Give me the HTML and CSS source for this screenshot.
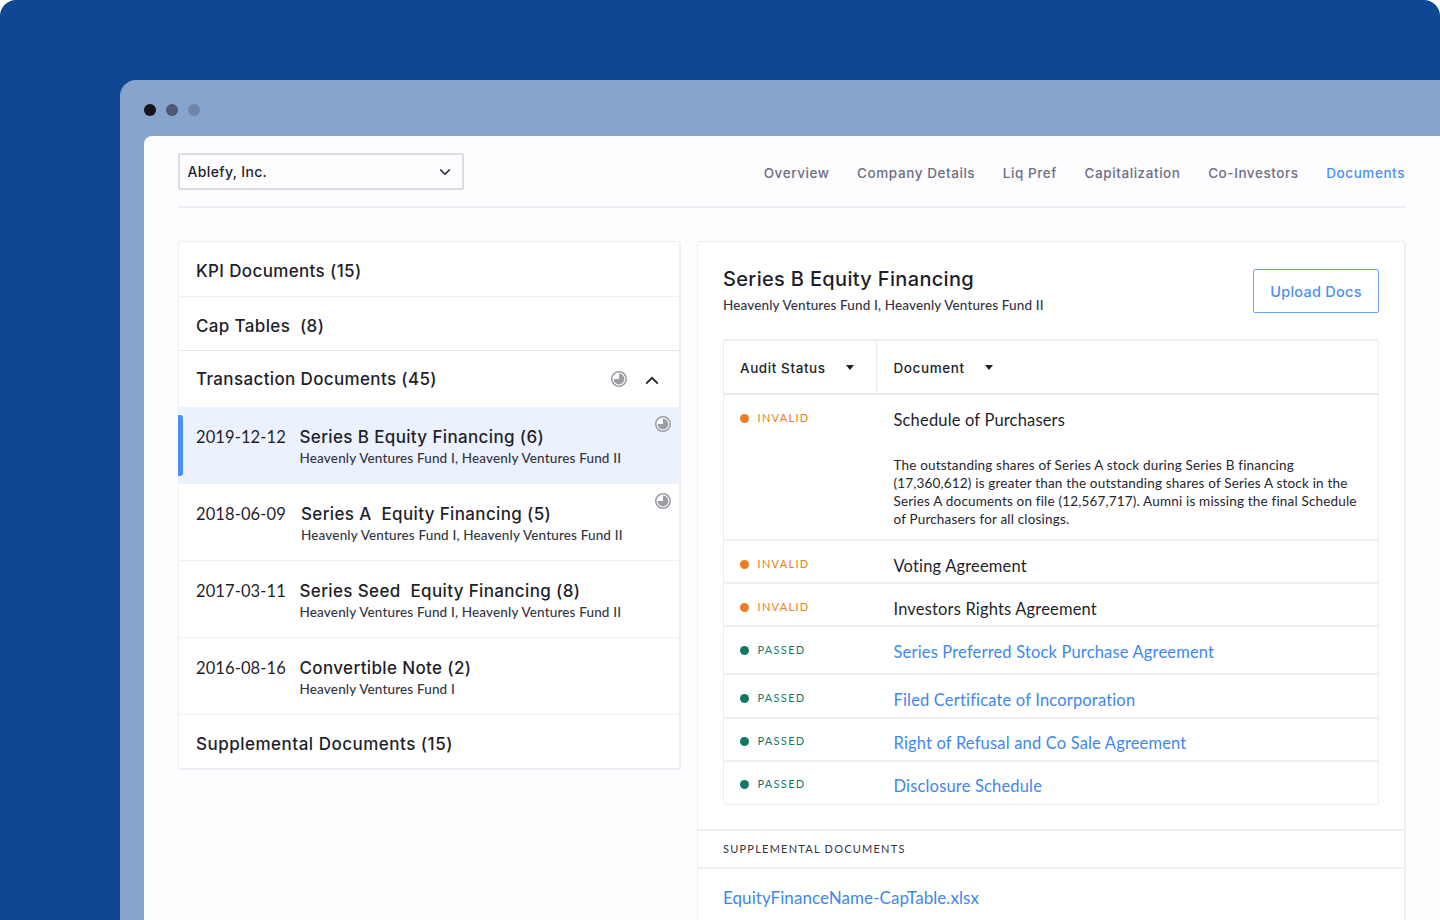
FILE: index.html
```html
<!DOCTYPE html>
<html lang="en">
<head>
<meta charset="utf-8">
<title>Ablefy Documents</title>
<link rel="stylesheet" href="styles.css">
</head>
<body>
<div class="stage">
  <div class="window">
    <div class="dots"><i class="dot d1"></i><i class="dot d2"></i><i class="dot d3"></i></div>
    <div class="app">
      <header class="topbar">
        <div class="select"><span>Ablefy, Inc.</span>
          <svg width="12" height="8" viewBox="0 0 12 8"><path d="M1.2 1.5 6 6.2l4.8-4.7" fill="none" stroke="#1f1f2b" stroke-width="1.5"/></svg>
        </div>
        <nav class="nav">
          <a>Overview</a><a>Company Details</a><a>Liq Pref</a><a>Capitalization</a><a>Co-Investors</a><a class="on">Documents</a>
        </nav>
      </header>
      <main class="columns">
        <section class="card left">
          <div class="row head h1"><h3>KPI Documents (15)</h3></div>
          <div class="row head h2"><h3>Cap Tables&nbsp; (8)</h3></div>
          <div class="row head h3"><h3>Transaction Documents (45)</h3>
            <svg class="pie hpie" width="16" height="16" viewBox="0 0 16 16"><circle cx="8" cy="8" r="7.25" fill="#fff" stroke="#9c9ca4" stroke-width="1.5"/><path d="M8 8V2.6A5.4 5.4 0 1 1 2.6 8Z" fill="#9c9ca4"/></svg>
            <svg class="chev" width="14" height="9" viewBox="0 0 14 9"><path d="M1.2 7.6 7 1.8l5.8 5.8" fill="none" stroke="#1f1f2b" stroke-width="1.7"/></svg>
          </div>
          <div class="row item active"><span class="date">2019-12-12</span><div class="info"><h4>Series B Equity Financing (6)</h4><p>Heavenly Ventures Fund I, Heavenly Ventures Fund II</p></div>
            <svg class="pie ipie" width="16" height="16" viewBox="0 0 16 16"><circle cx="8" cy="8" r="7.25" fill="#fff" stroke="#9c9ca4" stroke-width="1.5"/><path d="M8 8V2.6A5.4 5.4 0 1 1 2.6 8Z" fill="#9c9ca4"/></svg>
          </div>
          <div class="row item"><span class="date wide">2018-06-09</span><div class="info"><h4>Series A&nbsp; Equity Financing (5)</h4><p>Heavenly Ventures Fund I, Heavenly Ventures Fund II</p></div>
            <svg class="pie ipie" width="16" height="16" viewBox="0 0 16 16"><circle cx="8" cy="8" r="7.25" fill="#fff" stroke="#9c9ca4" stroke-width="1.5"/><path d="M8 8V2.6A5.4 5.4 0 1 1 2.6 8Z" fill="#9c9ca4"/></svg>
          </div>
          <div class="row item"><span class="date">2017-03-11</span><div class="info"><h4>Series Seed&nbsp; Equity Financing (8)</h4><p>Heavenly Ventures Fund I, Heavenly Ventures Fund II</p></div></div>
          <div class="row item"><span class="date">2016-08-16</span><div class="info"><h4>Convertible Note (2)</h4><p>Heavenly Ventures Fund I</p></div></div>
          <div class="row head h5"><h3>Supplemental Documents (15)</h3></div>
        </section>
        <section class="card right">
          <div class="title">
            <div><h2>Series B Equity Financing</h2><p>Heavenly Ventures Fund I, Heavenly Ventures Fund II</p></div>
            <button class="upload">Upload Docs</button>
          </div>
          <div class="table">
            <div class="thead">
              <div class="th c1">Audit Status<i class="caret"></i></div>
              <div class="th c2">Document<i class="caret"></i></div>
            </div>
            <div class="tr r1"><div class="st bad"><i></i>INVALID</div><div class="doc"><span>Schedule of Purchasers</span>
              <p class="note">The outstanding shares of Series A stock during Series B financing (17,360,612) is greater than the outstanding shares of Series A stock in the Series A documents on file (12,567,717). Aumni is missing the final Schedule of Purchasers for all closings.</p></div></div>
            <div class="tr r2"><div class="st bad"><i></i>INVALID</div><div class="doc"><span>Voting Agreement</span></div></div>
            <div class="tr r2"><div class="st bad"><i></i>INVALID</div><div class="doc"><span>Investors Rights Agreement</span></div></div>
            <div class="tr r3"><div class="st ok"><i></i>PASSED</div><div class="doc link"><span>Series Preferred Stock Purchase Agreement</span></div></div>
            <div class="tr r5"><div class="st ok"><i></i>PASSED</div><div class="doc link"><span>Filed Certificate of Incorporation</span></div></div>
            <div class="tr r4"><div class="st ok"><i></i>PASSED</div><div class="doc link"><span>Right of Refusal and Co Sale Agreement</span></div></div>
            <div class="tr r4"><div class="st ok"><i></i>PASSED</div><div class="doc link"><span>Disclosure Schedule</span></div></div>
          </div>
          <div class="supp">SUPPLEMENTAL DOCUMENTS</div>
          <div class="file">EquityFinanceName-CapTable.xlsx</div>
        </section>
      </main>
    </div>
  </div>
</div>
</body>
</html>
```
FILE: styles.css
```css
* { box-sizing: border-box; }
html, body { margin: 0; height: 920px; background: #fff; overflow: hidden; }
body { font-family: "Lato", "Liberation Sans", sans-serif; color: #1f1f2b; }
h2, h3, h4, p { margin: 0; font-weight: 500; }
.stage { width: 1440px; height: 920px; background: #0f4794; border-radius: 16px 16px 0 0; padding: 80px 0 0 120px; overflow: hidden; }
.window { height: 840px; background: #88a4cc; border-radius: 16px 0 0 0; padding-left: 24px; }
.dots { height: 56px; display: flex; align-items: center; gap: 10px; padding-top: 4px; }
.dot { width: 12px; height: 12px; border-radius: 50%; }
.d1 { background: #14131b; }
.d2 { background: #4d5874; }
.d3 { background: #6f84a8; }
.app { height: 784px; background: #fdfcff; border-radius: 8px 0 0 0; padding: 17px 34px 0; }
.topbar { display: flex; justify-content: space-between; align-items: flex-start; height: 55px; border-bottom: 2px solid #eeeef2; }
.select { width: 286px; height: 37px; border: 2px solid #dcdce2; border-radius: 2px; display: flex; align-items: center; justify-content: space-between; padding: 0 11px 0 7.5px; font: 500 14px "Inter", sans-serif; letter-spacing: .35px; }
.nav { display: flex; gap: 27.6px; padding: 11px 1px 0 0; font: 500 13.5px/18px "Inter", sans-serif; letter-spacing: .57px; color: #6e6e85; }
.nav .on { color: #4a90f5; }
.columns { display: flex; gap: 16px; margin-top: 33px; align-items: flex-start; }
.card { background: #fff; border: 2px solid #eeeef4; border-radius: 3px; }
.left { width: 503px; border-width: 1px 2px 2px 1px; }
.right { width: 709px; height: 700px; border-width: 1px 2px 0 1px; }
.row { border-bottom: 1px solid #f0f0f4; position: relative; padding-left: 17px; }
.head { display: flex; align-items: center; }
.h1 { height: 55px; padding-top: 4px; }
.h2 { height: 54px; padding-top: 4px; border-color: #e4e4ea; }
.h3 { height: 56px; padding-right: 20px; border: 0; }
.h5 { height: 53px; padding-top: 4px; border-bottom: 0; }
h3 { font: 500 17px "Inter", sans-serif; letter-spacing: .36px; color: #1f1f2b; flex: 1; }
.h5 h3 { letter-spacing: .5px; }
.pie { display: block; }
.hpie { margin-right: 18px; }
.chev { margin-top: 2px; }
.item { height: 77px; display: flex; padding-top: 19px; gap: 13px; }
.item.active { background: #ebf2fe; }
.item.active::before { content: ""; position: absolute; left: -1px; top: 8px; width: 5px; height: 61px; background: #4a90f5; border-radius: 0 3px 3px 0; }
.date { font-size: 16.5px; line-height: 22px; letter-spacing: .1px; width: 90.5px; white-space: nowrap; }
.date.wide { width: 92px; }
.info h4 { font: 500 17px/22px "Inter", sans-serif; letter-spacing: .36px; }
.info p { font-size: 13.5px; line-height: 18px; letter-spacing: .16px; margin-top: 1px; color: #35353f; }
.ipie { position: absolute; right: 8px; top: 9px; }
.title { display: flex; justify-content: space-between; padding: 23px 25px 0 25px; height: 97px; }
.title h2 { font: 500 20px/28px "Inter", sans-serif; letter-spacing: .33px; }
.title p { font-size: 13.5px; line-height: 18px; letter-spacing: .14px; margin-top: 3px; color: #35353f; }
.upload { width: 126px; height: 44px; margin-top: 4px; background: #fff; border: 1.5px solid #6aa3f4; border-radius: 2px; color: #4a90f5; font: 500 14.5px "Inter", sans-serif; letter-spacing: .25px; padding: 0; }
.table { margin: 0 25px; border: 1px solid #ececf2; border-top-width: 2px; border-radius: 3px; height: 466px; }
.thead { display: flex; height: 54px; border-bottom: 2px solid #e9e9f0; }
.th { font: 500 13.5px "Inter", sans-serif; letter-spacing: .58px; display: flex; align-items: center; padding: 2px 0 0 16px; }
.c1 { width: 153px; border-right: 1px solid #e9e9f0; }
.c2 { padding-left: 16.5px; }
.caret { width: 0; height: 0; border: 4.5px solid transparent; border-top: 5px solid #1f1f2b; border-bottom: 0; margin-left: 20px; margin-top: -2px; }
.tr { display: flex; border-bottom: 2px solid #eeeef4; }
.tr:last-child { border-bottom: 0; }
.r1 { height: 146px; }
.r2, .r4 { height: 43px; }
.r3 { height: 48px; }
.r5 { height: 44px; }
.st { width: 153px; padding: 15px 0 0 16px; font-size: 11px; line-height: 16px; letter-spacing: 1.3px; display: flex; gap: 8.5px; }
.r4 .st { padding-top: 14px; }
.st i { width: 9px; height: 9px; border-radius: 50%; margin-top: 3.5px; flex: none; }
.bad { color: #ed7d23; }
.bad i { background: #ed7d23; }
.ok { color: #127a64; }
.ok i { background: #127a64; }
.doc { flex: 1; padding: 13px 0 0 16.5px; font-size: 16.5px; line-height: 24px; letter-spacing: .17px; }
.r4 .doc { padding-top: 12px; }
.link { color: #3f87ee; }
.note { font-size: 13.5px; line-height: 18px; letter-spacing: .18px; font-weight: 400; margin-top: 24px; padding-right: 20px; color: #26262f; }
.supp { margin-top: 24px; height: 40px; border-top: 2px solid #f0f0f4; border-bottom: 2px solid #f0f0f4; padding: 10px 0 0 25px; font-size: 11px; line-height: 16px; letter-spacing: 1.23px; color: #33333d; }
.file { padding: 17px 0 0 25px; font-size: 17px; line-height: 24px; letter-spacing: .06px; color: #3f87ee; }
```
